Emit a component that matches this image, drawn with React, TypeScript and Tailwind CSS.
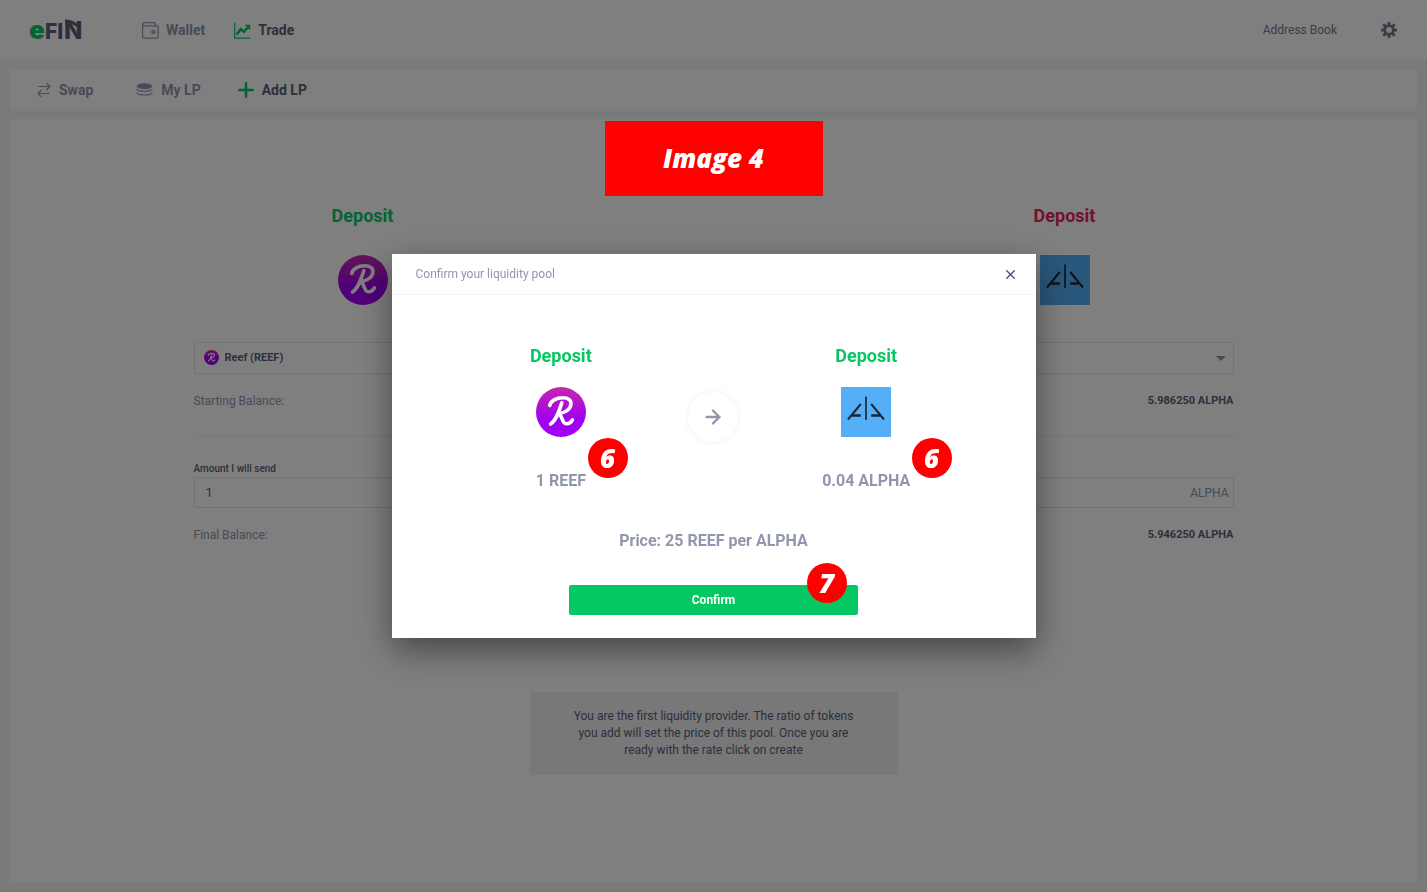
import { useState } from "react";
import { ArrowRight, X } from "lucide-react";

function Logo() {
  return (
    <a href="#" aria-label="eFIN" className="w-15">
      <svg width="60" height="36" viewBox="0 0 60 36" className="font-['Inter',sans-serif] font-extrabold" fill="#5a6079">
        <text x="0" y="27" fontSize="26" fontWeight="900" fill="#06c862">
          e
        </text>
        <text x="16" y="27" fontSize="21">
          FI
        </text>
        <text x="35" y="27" fontSize="24">
          N
        </text>
        <path d="M36 7.500c6.500 0 11.500 2.500 16 7.500l-3 1c-4-3.500-8-5-13-5z" />
      </svg>
    </a>
  );
}

function WalletIcon() {
  return (
    <svg width="17" height="17" viewBox="0 0 17 17" fill="none" stroke="currentColor" strokeWidth="1.2">
      <path d="M13.4 3.8V1.6a1 1 0 0 0-1-1H2a1.4 1.4 0 0 0-1.4 1.5v12.3A1.8 1.8 0 0 0 2.4 16.2h12.2a1.5 1.5 0 0 0 1.5-1.5V5.4a1.4 1.4 0 0 0-1.4-1.5H2.3A1.6 1.6 0 0 1 .7 2.3" />
      <circle cx="11.4" cy="9.9" r="1.5" strokeWidth="1.4" />
    </svg>
  );
}

function TradeIcon() {
  return (
    <svg width="17" height="17" viewBox="0 0 17 17" fill="none" stroke="#06c862">
      <path d="M.7.5v15.7h15.6" strokeWidth="1.2" />
      <path d="M2.6 12.4l4.2-5.2 3.1 2.6 4.2-4.7" strokeWidth="2.6" />
      <path d="M10.8 2.8h5.4v5.4z" fill="#06c862" stroke="none" />
    </svg>
  );
}

function SwapIcon() {
  return (
    <svg width="14" height="16" viewBox="0 0 14 16" fill="none" stroke="currentColor" strokeWidth="1.2">
      <path d="M1.2 4.5h11.5M9.5.8l3.4 3.7-3.4 3.7M12.7 11.5H1M4.4 7.8L1 11.5l3.4 3.7" />
    </svg>
  );
}

function CoinsIcon() {
  return (
    <svg width="17" height="14" viewBox="0 0 17 14" fill="none" stroke="currentColor" strokeWidth="1.1">
      <ellipse cx="8.5" cy="3.2" rx="7.8" ry="2.9" fill="currentColor" stroke="none" />
      <path d="M.7 6c1.6 3 14 3 15.6 0M.7 9.5c1.6 3.4 14 3.4 15.6 0" />
    </svg>
  );
}

function PlusIcon() {
  return (
    <svg width="16" height="16" viewBox="0 0 16 16" stroke="#06c862" strokeWidth="2.6" strokeLinecap="round">
      <path d="M8 1.3v13.4M1.3 8h13.4" />
    </svg>
  );
}

function GearIcon() {
  return (
    <svg width="16" height="16" viewBox="0 0 16 16" fill="none" stroke="currentColor">
      <circle cx="8" cy="8" r="4.3" strokeWidth="2.8" />
      <path d="M8 0v3M8 13v3M0 8h3M13 8h3M2.3 2.3l2.2 2.2M11.5 11.5l2.2 2.2M2.3 13.7l2.2-2.2M11.5 4.5l2.2-2.2" strokeWidth="2.8" />
    </svg>
  );
}

function ReefIcon({ className, id }: { className: string; id: string }) {
  return (
    <svg className={className} viewBox="0 0 50 50" fill="none">
      <defs>
        <linearGradient id={id} x1="0" y1="0" x2="0" y2="1">
          <stop offset="0" stopColor="#c527b0" />
          <stop offset="0.65" stopColor="#a000f0" />
          <stop offset="1" stopColor="#a000f8" />
        </linearGradient>
      </defs>
      <circle cx="25" cy="25" r="25" fill={`url(#${id})`} />
      <g stroke="#fff" strokeWidth="3.6" strokeLinecap="round" strokeLinejoin="round">
        <path d="M13.8 18.4c.7-4.6 6.6-7.6 13-7.6 5.6 0 8.7 2.5 8.1 6.6-.7 5-5.6 8.6-12.4 9" />
        <path d="M25.8 15.8c-2.6 7.8-5.2 17.4-11.2 21.2" />
        <path d="M22.8 26.5c3.4 1.6 3 10 7.4 10.3 3 .2 5.2-1.7 6.3-4" />
      </g>
    </svg>
  );
}

function AlphaIcon() {
  return (
    <svg className="size-[50px]" viewBox="0 0 50 50" fill="none" stroke="#1d2733">
      <path d="M0 0h50v50H0z" fill="#55aef8" stroke="none" />
      <path d="M25 9.5v23.5" strokeWidth="1.7" />
      <path d="M19.8 17L7 32.5M30.2 17L43 32.5" strokeWidth="2" />
      <path d="M11 28.5h8.8M30.2 28.5H39" strokeWidth="2.4" />
    </svg>
  );
}

interface TokenColumnProps {
  id: string;
  name: string;
  symbol: string;
  titleColor: string;
  start: string;
  end: string;
  amount: string;
}

function TokenColumn({ id, name, symbol, titleColor, start, end, amount }: TokenColumnProps) {
  const [value, setValue] = useState(amount);

  return (
    <section className="w-[338px] text-xs text-[#9096ad]">
      <h2 className={`text-center text-lg leading-6 font-bold ${titleColor}`}>Deposit</h2>
      <div className="mt-[27px] flex justify-center">
        {symbol === "REEF" ? <ReefIcon className="size-[50px]" id="reef-page" /> : <AlphaIcon />}
      </div>

      <div className="relative mt-[37px]">
        {symbol === "REEF" && (
          <span className="absolute top-2 left-[10px]">
            <ReefIcon className="size-[15px]" id="reef-small" />
          </span>
        )}
        <select
          aria-label="Token"
          className="block h-8 w-full appearance-none rounded-xs border border-[#e3e5ea] bg-white pl-[30px] text-[11px] font-bold text-[#5a6079]"
        >
          <option>{`${name} (${symbol})`}</option>
        </select>
        <svg className="absolute top-[14px] right-2" width="10" height="5" viewBox="0 0 10 5" fill="#9096ad">
          <path d="M0 0h10L5 5z" />
        </svg>
      </div>

      <div className="mt-[19px] flex justify-between">
        <span>Starting Balance:</span>
        <span className="text-[11px] leading-4 font-bold text-[#5a6079]">{start}</span>
      </div>
      <hr className="mt-[27px] border-[#eff0f3]" />

      <label htmlFor={id} className="mt-6 block text-[10px] leading-4 font-medium text-[#5a6079]">
        Amount I will send
      </label>
      <div className="flex h-[31px] items-center rounded-xs border border-[#e3e5ea] px-1">
        <input
          id={id}
          value={value}
          onChange={(e) => setValue(e.target.value)}
          className="min-w-0 flex-1 px-[7px] text-[13px] text-[#5a6079] outline-none"
        />
        <span>{symbol}</span>
      </div>
      <div className="mt-[19px] flex justify-between">
        <span>Final Balance:</span>
        <span className="text-[11px] leading-4 font-bold text-[#5a6079]">{end}</span>
      </div>
    </section>
  );
}

function Marker({ label, className }: { label: string; className: string }) {
  return (
    <span
      className={`absolute flex size-10 items-center justify-center rounded-full bg-[#f00] font-['Open_Sans',sans-serif] text-[26px] leading-none font-extrabold text-white italic ${className}`}
    >
      {label}
    </span>
  );
}

function ConfirmDialog() {
  return (
    <div
      role="dialog"
      aria-labelledby="dialog-title"
      className="relative w-[644px] bg-white pb-[23px] text-center text-[#9096ad] shadow-[0_12px_32px_rgba(0,0,0,0.45)]"
    >
      <header className="flex h-[41px] items-center justify-between border-b border-[#f3f3f5] pr-[18px] pl-6">
        <h1 id="dialog-title" className="text-xs">
          Confirm your liquidity pool
        </h1>
        <button aria-label="Close" className="text-[#434966]">
          <X size={15} strokeWidth={2} />
        </button>
      </header>

      <div className="grid grid-cols-3 px-[93px] pt-[49px] font-bold">
        <div className="flex flex-col items-center">
          <h2 className="text-lg leading-6 text-[#06c862]">Deposit</h2>
          <div className="mt-[19px]">
            <ReefIcon className="size-[50px]" id="reef-dialog" />
          </div>
          <p className="mt-8">1 REEF</p>
        </div>
        <div className="flex justify-center pt-12">
          <span className="flex size-[50px] items-center justify-center rounded-full shadow-[0_0_6px_rgba(0,0,0,0.07)]">
            <ArrowRight size={22} strokeWidth={2.5} />
          </span>
        </div>
        <div className="flex flex-col items-center">
          <h2 className="text-lg leading-6 text-[#06c862]">Deposit</h2>
          <div className="mt-[19px]">
            <AlphaIcon />
          </div>
          <p className="mt-8">0.04 ALPHA</p>
        </div>
      </div>

      <p className="mt-9 font-bold">Price: 25 REEF per ALPHA</p>
      <button className="mt-8 h-[30px] w-[289px] rounded-xs bg-[#06c862] text-xs font-bold text-white">Confirm</button>

      <Marker label="6" className="top-[184px] left-[196px]" />
      <Marker label="6" className="top-[184px] left-[520px]" />
      <Marker label="7" className="top-[309px] left-[415px]" />
    </div>
  );
}

export default function App() {
  return (
    <div className="flex min-h-screen flex-col bg-[#f1f7f4] pb-[10px] font-['Roboto',sans-serif] text-[#9096ad]">
      <header className="flex h-[60px] items-center bg-white pr-[30px] pl-[29px] text-sm font-bold">
        <Logo />
        <nav className="ml-[53px] flex gap-[29px]">
          <a href="#" className="flex items-center gap-[7px]">
            <WalletIcon />
            Wallet
          </a>
          <a href="#" className="flex items-center gap-[7px] text-[#5a6079]">
            <TradeIcon />
            Trade
          </a>
        </nav>
        <a href="#" className="ml-auto text-xs font-normal text-[#747994]">
          Address Book
        </a>
        <button aria-label="Settings" className="ml-11 text-[#747994]">
          <GearIcon />
        </button>
      </header>

      <nav className="mx-[10px] mt-[10px] flex h-[39px] items-center bg-white pl-[27px] text-sm font-bold">
        <a href="#" className="flex items-center gap-2">
          <SwapIcon />
          Swap
        </a>
        <a href="#" className="ml-[43px] flex items-center gap-2">
          <CoinsIcon />
          My LP
        </a>
        <a href="#" className="ml-[37px] flex items-center gap-2 text-[#5a6079]">
          <PlusIcon />
          Add LP
        </a>
      </nav>

      <main className="mx-[10px] mt-[10px] flex-1 bg-white pt-[85px]">
        <div className="mx-auto flex max-w-[1040px] justify-between">
          <TokenColumn
            id="reef-amount"
            name="Reef"
            symbol="REEF"
            titleColor="text-[#06c862]"
            start="26.000000 REEF"
            end="25.000000 REEF"
            amount="1"
          />
          <TokenColumn
            id="alpha-amount"
            name="Alpha"
            symbol="ALPHA"
            titleColor="text-[#e91e5a]"
            start="5.986250 ALPHA"
            end="5.946250 ALPHA"
            amount="0.04"
          />
        </div>
        <p className="mx-auto mt-[149px] w-[368px] bg-[#f0f0f0] px-10 py-4 text-center text-xs leading-[17px] text-[#5a6079]">
          You are the first liquidity provider. The ratio of tokens you add will set the price of this pool. Once you are
          ready with the rate click on create
        </p>
      </main>

      <div className="fixed inset-0 flex items-center justify-center bg-black/50">
        <ConfirmDialog />
        <div className="absolute inset-x-0 top-[121px] mx-auto flex h-[75px] w-[218px] items-center justify-center bg-[#f00] font-['Open_Sans',sans-serif] text-[26px] font-extrabold text-white italic">
          Image 4
        </div>
      </div>
    </div>
  );
}
